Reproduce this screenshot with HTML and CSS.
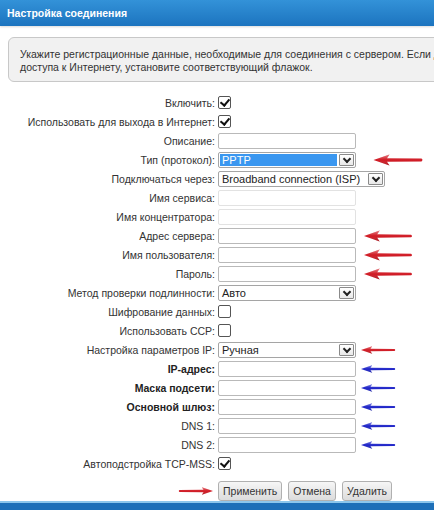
FILE: index.html
```html
<!DOCTYPE html>
<html lang="ru">

<head>
    <meta charset="UTF-8">
    <title>Настройка соединения</title>
    <link rel="stylesheet" href="styles.css">
</head>

<body>
    <div class="header">Настройка соединения</div>

    <div class="info">
        Укажите регистрационные данные, необходимые для соединения с сервером. Если для<br>
        доступа к Интернету, установите соответствующий флажок.
    </div>

    <div class="form">
        <div class="row"><span class="lbl">Включить:</span><span class="check on"></span></div>
        <div class="row"><span class="lbl">Использовать для выхода в Интернет:</span><span class="check on"></span></div>
        <div class="row"><span class="lbl">Описание:</span><input type="text" class="field"></div>
        <div class="row">
            <span class="lbl">Тип (протокол):</span>
            <span class="select"><span class="value picked">PPTP</span><span class="drop"></span></span>
            <svg class="arrow long red" viewBox="0 0 50 12"><use href="#arrow-left"/></svg>
        </div>
        <div class="row">
            <span class="lbl">Подключаться через:</span>
            <span class="select wide"><span class="value">Broadband connection (ISP)</span><span class="drop"></span></span>
        </div>
        <div class="row"><span class="lbl">Имя сервиса:</span><input type="text" class="field faint"></div>
        <div class="row"><span class="lbl">Имя концентратора:</span><input type="text" class="field faint"></div>
        <div class="row">
            <span class="lbl">Адрес сервера:</span><input type="text" class="field">
            <svg class="arrow mid red" viewBox="0 0 50 12"><use href="#arrow-left"/></svg>
        </div>
        <div class="row">
            <span class="lbl">Имя пользователя:</span><input type="text" class="field">
            <svg class="arrow mid red" viewBox="0 0 50 12"><use href="#arrow-left"/></svg>
        </div>
        <div class="row">
            <span class="lbl">Пароль:</span><input type="password" class="field">
            <svg class="arrow mid red" viewBox="0 0 50 12"><use href="#arrow-left"/></svg>
        </div>
        <div class="row">
            <span class="lbl">Метод проверки подлинности:</span>
            <span class="select"><span class="value">Авто</span><span class="drop"></span></span>
        </div>
        <div class="row"><span class="lbl">Шифрование данных:</span><span class="check"></span></div>
        <div class="row"><span class="lbl">Использовать CCP:</span><span class="check"></span></div>
        <div class="row">
            <span class="lbl">Настройка параметров IP:</span>
            <span class="select"><span class="value">Ручная</span><span class="drop"></span></span>
            <svg class="arrow short red" viewBox="0 0 50 12"><use href="#arrow-left"/></svg>
        </div>
        <div class="row">
            <span class="lbl bold">IP-адрес:</span><input type="text" class="field">
            <svg class="arrow short blue" viewBox="0 0 50 12"><use href="#arrow-left"/></svg>
        </div>
        <div class="row">
            <span class="lbl bold">Маска подсети:</span><input type="text" class="field">
            <svg class="arrow short blue" viewBox="0 0 50 12"><use href="#arrow-left"/></svg>
        </div>
        <div class="row">
            <span class="lbl bold">Основной шлюз:</span><input type="text" class="field">
            <svg class="arrow short blue" viewBox="0 0 50 12"><use href="#arrow-left"/></svg>
        </div>
        <div class="row">
            <span class="lbl">DNS 1:</span><input type="text" class="field">
            <svg class="arrow short blue" viewBox="0 0 50 12"><use href="#arrow-left"/></svg>
        </div>
        <div class="row">
            <span class="lbl">DNS 2:</span><input type="text" class="field">
            <svg class="arrow short blue" viewBox="0 0 50 12"><use href="#arrow-left"/></svg>
        </div>
        <div class="row"><span class="lbl">Автоподстройка TCP-MSS:</span><span class="check on"></span></div>

        <div class="buttons">
            <span class="lbl">
                <svg class="arrow short red flip" viewBox="0 0 50 12"><use href="#arrow-left"/></svg>
            </span>
            <button>Применить</button>
            <button>Отмена</button>
            <button>Удалить</button>
        </div>
    </div>

    <div class="footer"></div>

    <!-- shared arrow shape -->
    <svg width="0" height="0" class="defs">
        <defs>
            <linearGradient id="shade" x1="0" y1="0" x2="0" y2="1">
                <stop offset="0" stop-color="#fff" stop-opacity="0.45"/>
                <stop offset="0.5" stop-color="#fff" stop-opacity="0"/>
                <stop offset="1" stop-color="#000" stop-opacity="0.25"/>
            </linearGradient>
            <g id="arrow-left">
                <path d="M0 6 L16 0.5 L13.5 4.3 L48 4.6 Q50 6 48 7.4 L13.5 7.7 L16 11.5 Z" fill="currentColor"/>
                <path d="M0 6 L16 0.5 L13.5 4.3 L48 4.6 Q50 6 48 7.4 L13.5 7.7 L16 11.5 Z" fill="url(#shade)"/>
            </g>
        </defs>
    </svg>
</body>

</html>
```

FILE: styles.css
```css
html,
body {
    margin: 0;
    padding: 0;
    overflow: hidden;
}

body {
    font-family: "Liberation Sans", Arial, sans-serif;
    font-size: 10.5px;
    color: #333;
    background-color: #fff;
    width: 434px;
    height: 510px;
    display: flex;
    flex-direction: column;
}

.header {
    height: 27px;
    line-height: 26px;
    padding-left: 7px;
    color: #fff;
    font-size: 10.5px;
    font-weight: bold;
    background: linear-gradient(#3392d8, #1c74bf);
    box-shadow: 0 1px 2px rgba(0, 0, 0, 0.15);
}

.info {
    margin: 11px -40px 0 8px;
    height: 45px;
    box-sizing: border-box;
    padding: 10px 11px;
    line-height: 13px;
    white-space: nowrap;
    background-color: #f1f1f1;
    border: 1px solid #c8c8c8;
    border-radius: 6px;
}

.form {
    margin-top: 11px;
    flex: 1;
}

.row {
    display: flex;
    align-items: center;
    height: 19px;
}

.lbl {
    width: 215px;
    flex: none;
    text-align: right;
    margin-right: 3px;
    white-space: nowrap;
}

.lbl.bold {
    font-weight: bold;
    color: #222;
}

.field {
    width: 138px;
    height: 16px;
    box-sizing: border-box;
    margin: 0;
    padding: 0 3px;
    border: 1px solid #b9b9b9;
    border-radius: 2px;
    background: #fff;
    font: inherit;
}

.field.faint {
    border-color: #e2e2e2;
}

.check {
    width: 13px;
    height: 13px;
    box-sizing: border-box;
    border: 1px solid #555;
    border-radius: 2px;
    background: #fff;
    position: relative;
}

.check.on::after {
    content: "";
    position: absolute;
    left: 3px;
    top: 0px;
    width: 4px;
    height: 7px;
    border: solid #111;
    border-width: 0 2px 2px 0;
    transform: rotate(40deg);
}

.select {
    width: 138px;
    height: 16px;
    box-sizing: border-box;
    border: 1px solid #a5a5a5;
    border-radius: 2px;
    background: #fff;
    display: flex;
    padding: 1px;
}

.select.wide {
    width: 167px;
}

.select .value {
    flex: 1;
    line-height: 12px;
    padding-left: 2px;
    color: #222;
    font-size: 11px;
    white-space: nowrap;
    overflow: hidden;
}

.select .value.picked {
    background-color: #3a97f0;
    color: #fff;
    margin-right: 2px;
}

.drop {
    width: 15px;
    flex: none;
    box-sizing: border-box;
    border: 1px solid #8a8a8a;
    border-radius: 1px;
    background: linear-gradient(#fff, #e8e8e8);
    position: relative;
}

.drop::after {
    content: "";
    position: absolute;
    left: 4px;
    top: 1px;
    width: 4px;
    height: 4px;
    border: solid #222;
    border-width: 0 2px 2px 0;
    transform: rotate(45deg);
}

.arrow {
    height: 12px;
    flex: none;
}

.arrow.red {
    color: #d01822;
}

.arrow.blue {
    color: #1c22c8;
}

.arrow.long {
    width: 51px;
    margin-left: 17px;
}

.arrow.mid {
    width: 49px;
    margin-left: 8px;
}

.arrow.short {
    width: 35px;
    margin-left: 5px;
}

.arrow.flip {
    transform: scaleX(-1);
    margin: 0 2px 0 0;
    vertical-align: middle;
}

.buttons {
    display: flex;
    align-items: center;
    margin-top: 8px;
    gap: 6px;
}

.buttons .lbl {
    margin-right: -3px;
    display: flex;
    justify-content: flex-end;
}

button {
    height: 20px;
    padding: 0 4px;
    font-family: inherit;
    font-size: 10.5px;
    color: #333;
    border: 1px solid #b0b0b0;
    border-radius: 3px;
    background: linear-gradient(#f6f6f6, #dcdcdc);
}

.footer {
    height: 7px;
    border-top: 2px solid #8cc6ec;
    background: #1d6fb8;
}

.defs {
    position: absolute;
}
```
